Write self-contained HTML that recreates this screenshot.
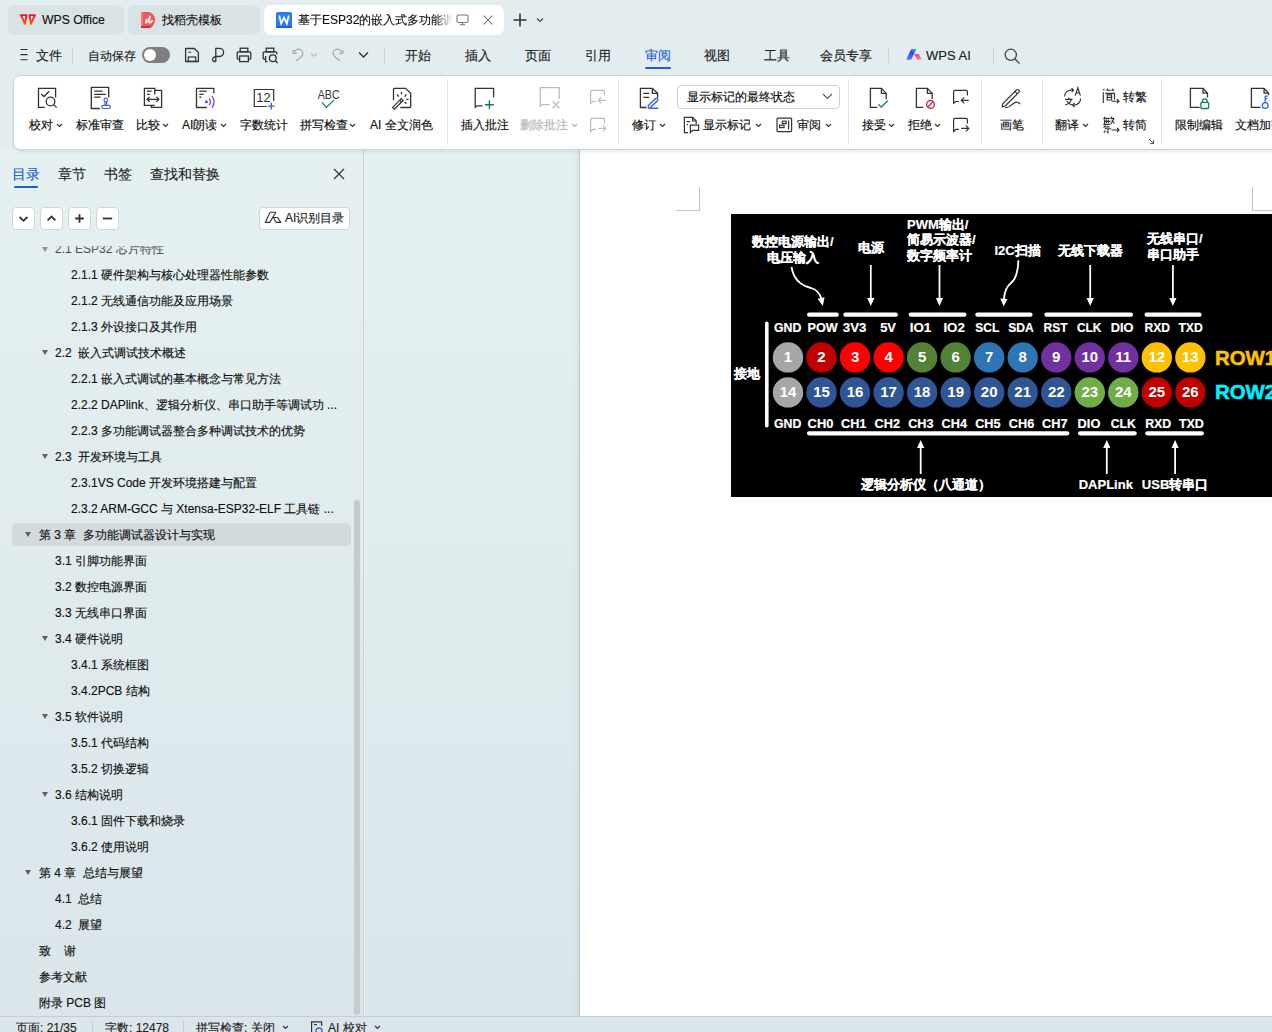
<!DOCTYPE html>
<html><head><meta charset="utf-8">
<style>
*{box-sizing:border-box;margin:0;padding:0}
html,body{width:1272px;height:1032px;overflow:hidden}
body{position:relative;font-family:"Liberation Sans",sans-serif;background:#e3edf0;color:#1f1f1f;font-size:13px;-webkit-text-stroke:0.15px currentColor}
.a{position:absolute;white-space:nowrap}
.tab{position:absolute;top:5px;height:30px;border-radius:7px;background:#d9e2e5}
.menu{position:absolute;top:47px;font-size:13px;line-height:18px;color:#222}
.sep{position:absolute;width:1px;background:#c9d2d5}
#ribbon{position:absolute;left:13px;top:75px;width:1280px;height:75px;background:#fff;border-radius:7px 0 0 7px;border:1px solid #cdd6d9;box-shadow:0 1px 2px rgba(80,100,110,.18)}
.rl{position:absolute;top:117px;font-size:12px;line-height:16px;color:#0d0d0d;white-space:nowrap}
.dd{top:123px;width:7px;height:5px;fill:none;stroke:#333;stroke-width:1.2}
.rsep{position:absolute;top:79px;height:66px;width:1px;background:#dfe3e5}
#panel{position:absolute;left:0;top:150px;width:365px;height:866px;background:linear-gradient(#e5f0f1,#dae6ea);border-right:1px solid #eef1f2}
#pline{position:absolute;left:363px;top:150px;width:1px;height:866px;background:#cdd3d5}
#gap{position:absolute;left:365px;top:150px;width:214px;height:866px;background:linear-gradient(#e5f0f1,#dae6ea)}
#page{position:absolute;left:579px;top:150px;width:693px;height:866px;background:#fff;border-left:1px solid #bfc3c5;box-shadow:-4px 0 5px rgba(40,70,90,.05)}
#rshadow{position:absolute;left:18px;top:150px;width:1254px;height:5px;background:linear-gradient(rgba(60,80,90,.10),rgba(60,80,90,0))}
#status{position:absolute;left:0;top:1016px;width:1272px;height:16px;background:#dbe6eb;border-top:1px solid #c5ced1}
.st{top:1020px;font-size:12px;line-height:16px;color:#1f1f1f}
.toc{position:absolute;font-size:12px;line-height:16px;color:#111;white-space:nowrap}
.tri{position:absolute;width:0;height:0;border-left:3.6px solid transparent;border-right:3.6px solid transparent;border-top:5.6px solid #606060}
.hl{position:absolute;left:12px;width:339px;height:23px;border-radius:5px;background:#d2dadd}
.btn{position:absolute;top:207px;width:23px;height:23px;background:#fff;border:1px solid #cfd6d9;border-radius:4px}
</style></head><body>
<!-- tabs -->
<div class="tab" style="left:8px;width:116px"></div>
<div class="tab" style="left:128px;width:132px"></div>
<div class="tab" style="left:264px;width:240px;background:#fff"></div>
<svg class="a" style="left:19px;top:13px" width="18" height="13" viewBox="0 0 18 13"><defs><linearGradient id="wg" x1="0" y1="0" x2="0" y2="1"><stop offset="0" stop-color="#ff1020"/><stop offset="1" stop-color="#ff5a00"/></linearGradient></defs><g fill="none" stroke="url(#wg)" stroke-width="1.9" stroke-linejoin="round"><path d="M1.9 2.1H7.4L6.1 10.9Z"/><path d="M10.5 2.1H16L11.9 10.9Z"/></g></svg>
<div class="a" style="left:42px;top:12px;font-size:12.2px;line-height:16px;color:#111">WPS Office</div>
<svg class="a" style="left:141px;top:12px" width="15" height="16" viewBox="0 0 15 16"><path d="M0 0H6.8A7.2 8 0 0 1 6.8 16H0Z" fill="#f05656"/><rect x="0" y="0" width="2" height="16" fill="#f47a7a"/><path d="M0 14H11.6A7.2 8 0 0 1 6.8 16H0Z" fill="#e02a2a"/><ellipse cx="5.3" cy="9.2" rx="1" ry="2.7" transform="rotate(12 5.3 9.2)" fill="#fff"/><ellipse cx="8.1" cy="7.3" rx="1.05" ry="4.1" transform="rotate(17 8.1 7.3)" fill="#fff"/><ellipse cx="9.9" cy="9.9" rx="1" ry="2.5" transform="rotate(52 9.9 9.9)" fill="#fff"/></svg>
<div class="a" style="left:162px;top:12px;font-size:12px;line-height:16px;color:#111">找稻壳模板</div>
<svg class="a" style="left:276px;top:12px" width="16" height="16" viewBox="0 0 16 16"><rect x="0" y="0" width="16" height="16" rx="2" fill="#2b7bf0"/><rect x="0" y="14" width="16" height="2" fill="#1d5fd8"/><path d="M3.2 3.5 L5.2 11.5 L8 5.6 L10.8 11.5 L12.8 3.5" stroke="#fff" stroke-width="1.8" fill="none" stroke-linejoin="miter"/></svg>
<div class="a" style="left:298px;top:12px;width:154px;overflow:hidden;font-size:12px;line-height:16px;color:#111;-webkit-mask-image:linear-gradient(90deg,#000 calc(100% - 16px),transparent)">基于ESP32的嵌入式多功能调试器</div>
<svg class="a" style="left:456px;top:14px" width="13" height="12" viewBox="0 0 13 12"><rect x="1" y="1" width="11" height="7.5" rx="1.5" stroke="#777" stroke-width="1.1" fill="none"/><path d="M6.5 8.5V10.8M3.8 10.8H9.2" stroke="#777" stroke-width="1.1"/></svg>
<svg class="a" style="left:483px;top:15px" width="10" height="10" viewBox="0 0 10 10"><path d="M0.6 0.6L9.4 9.4M9.4 0.6L0.6 9.4" stroke="#777" stroke-width="1.1"/></svg>
<svg class="a" style="left:513px;top:13px" width="14" height="14" viewBox="0 0 14 14"><path d="M7 0.5V13.5M0.5 7H13.5" stroke="#333" stroke-width="1.6"/></svg>
<svg class="a" style="left:536px;top:17px" width="8" height="6" viewBox="0 0 8 6"><path d="M1 1.5L4 4.5L7 1.5" stroke="#444" stroke-width="1.2" fill="none"/></svg>

<!-- menu row -->
<svg class="a" style="left:19px;top:48px" width="10" height="13" viewBox="0 0 10 13"><path d="M1.5 1.5H8.5M1.5 6.6H8.5M1.5 11.7H8.5" stroke="#333" stroke-width="1.1"/></svg>
<div class="menu" style="left:36px;font-size:12.5px">文件</div>
<div class="sep" style="left:72px;top:47px;height:17px"></div>
<div class="menu" style="left:88px;font-size:12px">自动保存</div>
<div class="a" style="left:142px;top:47px;width:28px;height:16px;border-radius:8px;background:#7f7f7f"></div>
<div class="a" style="left:144px;top:49px;width:12px;height:12px;border-radius:6px;background:#fff"></div>
<svg class="a" style="left:184px;top:47px" width="16" height="16" viewBox="0 0 16 16"><path d="M1.6 1.5H10.4L14.4 5.5V14.5H1.6Z" stroke="#333" stroke-width="1.3" fill="none" stroke-linejoin="round"/><rect x="4.3" y="10" width="7.4" height="4.5" stroke="#333" stroke-width="1.2" fill="none"/><path d="M4.5 5.2H7" stroke="#333" stroke-width="1.2"/></svg>
<svg class="a" style="left:211px;top:47px" width="14" height="16" viewBox="0 0 14 16"><path d="M4.8 14.5V1.3H8.5A4.1 4.1 0 0 1 8.5 9.5H5.8C3.5 9.5 1.5 10.5 1.5 12.4C1.5 14 3 14.6 4.8 14.5" stroke="#333" stroke-width="1.3" fill="none"/></svg>
<svg class="a" style="left:236px;top:47px" width="16" height="16" viewBox="0 0 16 16"><rect x="4.2" y="1.2" width="7.6" height="3.6" stroke="#333" stroke-width="1.3" fill="none"/><path d="M3.6 12.2H2.4A1.2 1.2 0 0 1 1.2 11V6A1.2 1.2 0 0 1 2.4 4.8H13.6A1.2 1.2 0 0 1 14.8 6V11A1.2 1.2 0 0 1 13.6 12.2H12.4" stroke="#333" stroke-width="1.3" fill="none"/><rect x="3.6" y="9" width="8.8" height="5.6" stroke="#333" stroke-width="1.3" fill="none"/></svg>
<svg class="a" style="left:262px;top:47px" width="17" height="17" viewBox="0 0 17 17"><rect x="4.2" y="1.2" width="7.6" height="3.6" stroke="#333" stroke-width="1.3" fill="none"/><path d="M3 12.2H2.4A1.2 1.2 0 0 1 1.2 11V6A1.2 1.2 0 0 1 2.4 4.8H13.6A1.2 1.2 0 0 1 14.8 6V7.5" stroke="#333" stroke-width="1.3" fill="none"/><path d="M3.6 9V14.6H5.5" stroke="#333" stroke-width="1.3" fill="none"/><circle cx="10.8" cy="11.2" r="3.4" stroke="#333" stroke-width="1.3" fill="none"/><path d="M13.2 13.6L15.6 16" stroke="#333" stroke-width="1.3"/></svg>
<svg class="a" style="left:291px;top:48px" width="14" height="15" viewBox="0 0 14 15" fill="none" stroke="#a8acae" stroke-width="1.3"><path d="M3.4 4.4A4 4 0 0 1 11.6 6.6C11.4 8.2 10.4 9.2 5 12.6"/><path d="M2.2 1.8V5.4H5.8"/></svg>
<svg class="a" style="left:310px;top:52px" width="8" height="6" viewBox="0 0 8 6"><path d="M1.2 1.5L4 4.3L6.8 1.5" stroke="#b5b9bb" stroke-width="1.1" fill="none"/></svg>
<svg class="a" style="left:331px;top:48px" width="14" height="15" viewBox="0 0 14 15" fill="none" stroke="#a8acae" stroke-width="1.3"><path d="M10.6 4.4A4 4 0 0 0 2.4 6.6C2.6 8.2 3.6 9.2 9 12.6"/><path d="M11.8 1.8V5.4H8.2"/></svg>
<svg class="a" style="left:358px;top:51px" width="11" height="8" viewBox="0 0 11 8"><path d="M1 1.5L5.5 6L10 1.5" stroke="#333" stroke-width="1.4" fill="none"/></svg>
<div class="sep" style="left:384px;top:47px;height:17px"></div>
<div class="menu" style="left:405px">开始</div>
<div class="menu" style="left:465px">插入</div>
<div class="menu" style="left:525px">页面</div>
<div class="menu" style="left:585px">引用</div>
<div class="menu" style="left:645px;color:#1a5fd0">审阅</div>
<div class="a" style="left:645px;top:67px;width:26px;height:2px;background:#1a5fd0;border-radius:1px"></div>
<div class="menu" style="left:704px">视图</div>
<div class="menu" style="left:764px">工具</div>
<div class="menu" style="left:820px">会员专享</div>
<div class="sep" style="left:888px;top:48px;height:15px"></div>
<svg class="a" style="left:905px;top:48px" width="18" height="13" viewBox="0 0 18 13"><defs><linearGradient id="aig1" x1="0.8" y1="0" x2="0.2" y2="1"><stop offset="0" stop-color="#1fb2ff"/><stop offset="0.35" stop-color="#3a3cf0"/><stop offset="1" stop-color="#4f86f7"/></linearGradient><linearGradient id="aig2" x1="0" y1="0" x2="1" y2="1"><stop offset="0" stop-color="#e81ee8"/><stop offset="1" stop-color="#ff9a7a"/></linearGradient></defs><path d="M6.2 1.1H11.5L6 11.7H1.1Z" fill="url(#aig1)"/><path d="M9.1 6.1H13.9L17 11.7H12.2Z" fill="url(#aig2)"/></svg>
<div class="menu" style="left:926px">WPS AI</div>
<div class="sep" style="left:993px;top:47px;height:17px"></div>
<svg class="a" style="left:1004px;top:48px" width="17" height="16" viewBox="0 0 17 16"><circle cx="6.8" cy="6.8" r="5.6" stroke="#444" stroke-width="1.3" fill="none"/><path d="M10.8 10.8L15.6 15.6" stroke="#444" stroke-width="1.3"/></svg>

<!-- ribbon -->
<div id="ribbon"></div>
<!-- ribbon icons -->
<svg class="a" style="left:36px;top:86px" width="24" height="24" viewBox="0 0 24 24" fill="none" stroke="#333" stroke-width="1.3"><path d="M8.8 21.3H2.5V2.4H19.6V11.6"/><path d="M5.3 8L7.9 10.5L13.2 5.2"/><circle cx="14.5" cy="15.5" r="4.3"/><path d="M17.6 18.6L20.7 21.6"/></svg>
<svg class="a" style="left:90px;top:86px" width="24" height="24" viewBox="0 0 24 24" fill="none" stroke="#333" stroke-width="1.3"><path d="M9.8 22.5H1.3V1.3H18.7V11.6"/><path d="M4.2 5.2H12.7M4.2 8.4H15.8M4.2 11.2H10.5"/><g stroke="#3b63e8" stroke-width="1.2"><circle cx="15.8" cy="14" r="1.8"/><path d="M15 15.6V19.4M16.6 15.6V19.4"/><rect x="11.8" y="19.4" width="8.6" height="3.1" rx="1.5"/></g></svg>
<svg class="a" style="left:143px;top:86px" width="22" height="24" viewBox="0 0 22 24" fill="none" stroke="#333" stroke-width="1.3"><path d="M11.8 8.4V2.4H1.4V19.4H11.8"/><path d="M11.8 4.4H18.6V21.3H8.4V19.4"/><path d="M4 5.2H8.7M4 8.4H6.8"/><path d="M4.2 13.3H15.8M6.6 10.9L4.2 13.3L6.6 15.7M13.4 10.9L15.8 13.3L13.4 15.7"/></svg>
<svg class="a" style="left:195px;top:86px" width="22" height="24" viewBox="0 0 22 24" fill="none" stroke="#333" stroke-width="1.3"><path d="M11.8 21.5H1.5V2.4H18.8V7.3"/><path d="M4.3 5.2H11.8M4.3 8.4H8.6M4.3 11.2H6.5"/><g stroke="#7a3cf0" stroke-width="1.3"><circle cx="11.4" cy="15.8" r="0.9" fill="#7a3cf0"/><path d="M14.2 12.3C15.6 14.3 15.6 17.3 14.2 19.3"/><path d="M17 10C19.4 13.4 19.4 18.2 17 21.8"/></g></svg>
<svg class="a" style="left:252px;top:86px" width="25" height="24" viewBox="0 0 25 24" fill="none" stroke="#333" stroke-width="1.2"><path d="M14.8 20.5H2.3V3.5H21.7V14.9"/><text x="4.2" y="16" font-family="Liberation Sans" font-size="13" fill="#333" stroke="none">12</text><path d="M19.3 16.8V23.4M16 20.1H22.6" stroke="#2f5ff0" stroke-width="1.3"/></svg>
<svg class="a" style="left:316px;top:86px" width="26" height="24" viewBox="0 0 26 24"><text x="1.8" y="12.9" font-family="Liberation Sans" font-size="13.6" fill="#333" textLength="21.8" lengthAdjust="spacingAndGlyphs">ABC</text><path d="M6.1 16.3L10.2 21.5L18.2 13.9" stroke="#1a8a5a" stroke-width="1.3" fill="none"/></svg>
<svg class="a" style="left:390px;top:86px" width="22" height="24" viewBox="0 0 22 24" fill="none" stroke="#333" stroke-width="1.3"><path d="M3.5 14.2V3.2A0.8 0.8 0 0 1 4.3 2.4H15.6L20.7 7.3V20.7A0.8 0.8 0 0 1 19.9 21.5H10.3"/><path d="M11.5 6V8.6M7.1 8.4L8.7 10.6M16.4 8.4L14.5 10.6M16.3 13.4H18.6M14.5 16L16.4 17.7"/><path d="M2.6 21.4L4.4 23.2L13.1 14.4L11.3 12.6Z"/><path d="M9.6 14.2L11.5 16"/></svg>
<svg class="a" style="left:473px;top:86px" width="24" height="24" viewBox="0 0 24 24" fill="none" stroke="#333" stroke-width="1.3"><path d="M9.5 19.8H4.2L2.2 21.2V2.4H20.6V11.4"/><path d="M16.4 14.3V23.2M12 18.7H20.9" stroke="#0e8050" stroke-width="1.4"/></svg>
<svg class="a" style="left:538px;top:86px" width="24" height="24" viewBox="0 0 24 24" fill="none" stroke="#bbb" stroke-width="1.3"><path d="M11.5 18.6H4.2L2.2 20.2V1.6H21.2V13"/><path d="M14.6 15.4L21.3 22.2M21.3 15.4L14.6 22.2"/></svg>
<svg class="a" style="left:588px;top:88px" width="20" height="17" viewBox="0 0 20 17" fill="none" stroke="#bbb" stroke-width="1.2"><path d="M7.9 13.5H4.9L2.6 15.2V3.6A1.2 1.2 0 0 1 3.8 2.4H15.2A1.2 1.2 0 0 1 16.4 3.6V7.4"/><path d="M10.3 12.4H17.8M13.3 9.4L10.3 12.4L13.3 15.4"/></svg>
<svg class="a" style="left:588px;top:116px" width="20" height="17" viewBox="0 0 20 17" fill="none" stroke="#bbb" stroke-width="1.2"><path d="M7.9 13.3H4.9L2.6 15.5V3.6A1.2 1.2 0 0 1 3.8 2.4H15.2A1.2 1.2 0 0 1 16.4 3.6V7.5"/><path d="M10.3 12.4H17.8M14.8 9.4L17.8 12.4L14.8 15.4"/></svg>
<svg class="a" style="left:638px;top:86px" width="24" height="24" viewBox="0 0 24 24" fill="none" stroke="#333" stroke-width="1.3"><path d="M8.6 21.5H2.4V2.4H14.4L19.6 7.4V11.8"/><path d="M14.4 2.4V7.4H19.6"/><path d="M5.3 7.4H11.2M5.3 11.4H11.2"/><g stroke="#2f5ff0" stroke-width="1.4"><path d="M10.4 22.2H20.4M10.4 22.2V19.6L17.4 12.8A1.4 1.4 0 0 1 19.4 14.8L12.4 21.6"/></g></svg>
<div class="a" style="left:677px;top:85px;width:163px;height:24px;border:1px solid #cfcfcf;border-radius:4px;background:#fff"></div>
<div class="rl" style="left:687px;top:89px">显示标记的最终状态</div>
<svg class="a" style="left:822px;top:93px" width="11" height="7" viewBox="0 0 11 7"><path d="M1 1L5.5 5.5L10 1" stroke="#555" stroke-width="1.1" fill="none"/></svg>
<svg class="a" style="left:683px;top:116px" width="17" height="18" viewBox="0 0 17 18" fill="none" stroke="#333" stroke-width="1.2"><path d="M5 16.6H1.4V1.3H9.6L13.2 5V8"/><path d="M9.6 1.3V5H13.2"/><path d="M3.6 5.6H7M3.6 8.6H5"/><path d="M6.8 9.2H15.6V14.4H9.8L7.4 16.6V9.2Z"/></svg>
<svg class="a" style="left:776px;top:117px" width="17" height="16" viewBox="0 0 17 16" fill="none" stroke="#333" stroke-width="1.2"><rect x="1" y="1.2" width="14.6" height="13.4" rx="1"/><rect x="3.6" y="8.2" width="4.4" height="2.4"/><rect x="6.4" y="4.2" width="3.8" height="2.4"/><path d="M12.6 3.4V12.4"/></svg>
<svg class="a" style="left:868px;top:86px" width="24" height="24" viewBox="0 0 24 24" fill="none" stroke="#333" stroke-width="1.3"><path d="M9.4 21.3H2.4V2.4H13.4L18.2 7.4V13.2"/><path d="M13.4 2.4V7.4H18.2"/><path d="M10.5 18.3L13.2 21.2L20 14.6" stroke="#1a8a5a" stroke-width="1.4"/></svg>
<svg class="a" style="left:914px;top:86px" width="24" height="24" viewBox="0 0 24 24" fill="none" stroke="#333" stroke-width="1.3"><path d="M9.4 21.3H2.4V2.4H13.4L18.2 7.4V13"/><path d="M13.4 2.4V7.4H18.2"/><g stroke="#d0284a" stroke-width="1.4"><circle cx="16.5" cy="18.4" r="3.9"/><path d="M14 21L19 15.8"/></g></svg>
<svg class="a" style="left:951px;top:88px" width="20" height="17" viewBox="0 0 20 17" fill="none" stroke="#333" stroke-width="1.2"><path d="M7.9 13.5H4.9L2.6 15.2V3.6A1.2 1.2 0 0 1 3.8 2.4H15.2A1.2 1.2 0 0 1 16.4 3.6V7.4"/><path d="M10.3 12.4H17.8M13.3 9.4L10.3 12.4L13.3 15.4"/></svg>
<svg class="a" style="left:951px;top:116px" width="20" height="17" viewBox="0 0 20 17" fill="none" stroke="#333" stroke-width="1.2"><path d="M7.9 13.3H4.9L2.6 15.5V3.6A1.2 1.2 0 0 1 3.8 2.4H15.2A1.2 1.2 0 0 1 16.4 3.6V7.5"/><path d="M10.3 12.4H17.8M14.8 9.4L17.8 12.4L14.8 15.4"/></svg>
<svg class="a" style="left:1000px;top:86px" width="24" height="24" viewBox="0 0 24 24" fill="none" stroke="#333" stroke-width="1.2"><path d="M2.6 17.8L16.4 4A1.6 1.6 0 0 1 18.8 6.4L5 20.2L2.2 20.8Z"/><path d="M15 5.4L17.4 7.8"/><path d="M5.4 21.6C8.4 22.4 10.4 20 12.4 18.2C14.2 16.6 15.8 15.6 17.6 16.2C18.8 16.6 19.6 17.6 20.2 18"/></svg>
<svg class="a" style="left:1063px;top:86px" width="20" height="24" viewBox="0 0 20 24" fill="none" stroke="#333" stroke-width="1.2"><path d="M1.6 10.6A6.4 6.4 0 0 1 7.6 4.2H10.2M8.6 2.2L10.6 4.2L8.6 6.2"/><path d="M12.2 9.6L14.8 1.8L17.4 9.6M13.2 7H16.4"/><path d="M2 13.4H9.6M5.8 11.6V13.4M8.4 13.4C7.6 16 5 18.2 2.2 19M3.6 14.8C4.8 17 6.6 18.4 9 19"/><path d="M17.6 12.6A6.4 6.4 0 0 1 11.6 19H9.8M11.6 16.8L9.6 19L11.6 21.2"/></svg>
<svg class="a" style="left:1102px;top:88px" width="18" height="16" viewBox="0 0 18 16" fill="none" stroke="#333" stroke-width="1.15"><path d="M1.2 1L2.4 2.4M1.3 4.2V15M4.3 2.2H8.8M5.3 0.6L5.8 2.2M9.4 2.2H12.2M10.6 0.6L11.2 2.2M3.3 5.4H12.5V11.6"/><path d="M5.2 6.8H9.6V12H5.2ZM5.2 9.4H9.6"/><path d="M9.6 13.2H17M15 11.2L17 13.2L15 15.2"/></svg>
<svg class="a" style="left:1102px;top:116px" width="18" height="18" viewBox="0 0 18 18" fill="none" stroke="#333" stroke-width="1.1"><path d="M3 0.8L1.5 3.2M2.4 2.4H7.6M1.8 5.4H8.4M2.6 3.6V8.4M4.4 3.6V7M6.4 3.6V7M1.2 8.4H8.6M9.6 0.8L8.8 3M9.2 2.4H12.4M12 2.4L9 7.8M9.8 3.8L12.4 7.8"/><path d="M3.6 9.4L2 11H7.6M6.4 10L5 11.4M2.6 12.8H9.2M6 12.8V16.6L4.6 16M3.4 14.6L1.8 16.6"/><path d="M9.4 14H17M15 12L17 14L15 16"/></svg>
<svg class="a" style="left:1148px;top:138px" width="7" height="7" viewBox="0 0 7 7" fill="none" stroke="#555" stroke-width="1"><path d="M1 1L5.6 5.6M5.6 2V5.6H2"/></svg>
<svg class="a" style="left:1188px;top:86px" width="24" height="24" viewBox="0 0 24 24" fill="none" stroke="#333" stroke-width="1.3"><path d="M11.6 21.3H2.4V2.4H15.1L19.5 7.2V11.6"/><path d="M15.1 2.4V7.2H19.5"/><g stroke="#128050" stroke-width="1.3"><path d="M14.4 16.4V15.2A2.4 2.4 0 0 1 19.2 15.2V16.4"/><rect x="12.9" y="16.4" width="7.7" height="6.1" rx="1"/></g></svg>
<svg class="a" style="left:1250px;top:86px" width="22" height="24" viewBox="0 0 22 24" fill="none" stroke="#333" stroke-width="1.3"><path d="M10.6 21.3H1.4V2.4H14.1L18.5 7.2V9"/><path d="M14.1 2.4V7.2H18.5"/><g stroke="#2f5ff0" stroke-width="1.3"><circle cx="15.2" cy="19.5" r="2.9"/><path d="M15.2 16.6V9.8M15.2 10.2H17.8M15.2 12.6H17.2"/></g></svg>
<!-- ribbon labels -->
<div class="rl" style="left:29px">校对</div>
<div class="rl" style="left:76px">标准审查</div>
<div class="rl" style="left:136px">比较</div>
<div class="rl" style="left:182px">AI朗读</div>
<div class="rl" style="left:240px">字数统计</div>
<div class="rl" style="left:300px">拼写检查</div>
<div class="rl" style="left:370px">AI 全文润色</div>
<div class="rl" style="left:461px">插入批注</div>
<div class="rl" style="left:520px;color:#b3b3b3">删除批注</div>
<div class="rl" style="left:632px">修订</div>
<div class="rl" style="left:703px">显示标记</div>
<div class="rl" style="left:797px">审阅</div>
<div class="rl" style="left:862px">接受</div>
<div class="rl" style="left:908px">拒绝</div>
<div class="rl" style="left:1000px">画笔</div>
<div class="rl" style="left:1055px">翻译</div>
<div class="rl" style="left:1123px;top:89px">转繁</div>
<div class="rl" style="left:1123px">转简</div>
<div class="rl" style="left:1175px">限制编辑</div>
<div class="rl" style="left:1235px">文档加密</div>
<!-- dropdown chevrons -->
<svg class="a dd" style="left:56px"><path d="M1 1L3.5 3.5L6 1"/></svg>
<svg class="a dd" style="left:162px"><path d="M1 1L3.5 3.5L6 1"/></svg>
<svg class="a dd" style="left:220px"><path d="M1 1L3.5 3.5L6 1"/></svg>
<svg class="a dd" style="left:349px"><path d="M1 1L3.5 3.5L6 1"/></svg>
<svg class="a dd" style="left:571px;stroke:#b3b3b3"><path d="M1 1L3.5 3.5L6 1"/></svg>
<svg class="a dd" style="left:659px"><path d="M1 1L3.5 3.5L6 1"/></svg>
<svg class="a dd" style="left:755px"><path d="M1 1L3.5 3.5L6 1"/></svg>
<svg class="a dd" style="left:825px"><path d="M1 1L3.5 3.5L6 1"/></svg>
<svg class="a dd" style="left:888px"><path d="M1 1L3.5 3.5L6 1"/></svg>
<svg class="a dd" style="left:934px"><path d="M1 1L3.5 3.5L6 1"/></svg>
<svg class="a dd" style="left:1082px"><path d="M1 1L3.5 3.5L6 1"/></svg>
<!-- ribbon separators -->
<div class="rsep" style="left:447px"></div>
<div class="rsep" style="left:618px"></div>
<div class="rsep" style="left:848px"></div>
<div class="rsep" style="left:981px"></div>
<div class="rsep" style="left:1042px"></div>
<div class="rsep" style="left:1161px"></div>

<!-- panels -->
<div id="panel"></div>
<div id="gap"></div>
<div id="pline"></div>
<div id="page"></div>
<div id="rshadow"></div>
<!-- panel header -->
<div class="a" style="left:12px;top:165px;font-size:14px;line-height:18px;color:#1a5fd0">目录</div>
<div class="a" style="left:14px;top:186px;width:24px;height:2px;background:#1a5fd0;border-radius:1px"></div>
<div class="a" style="left:58px;top:165px;font-size:14px;line-height:18px;color:#1f1f1f">章节</div>
<div class="a" style="left:104px;top:165px;font-size:14px;line-height:18px;color:#1f1f1f">书签</div>
<div class="a" style="left:150px;top:165px;font-size:14px;line-height:18px;color:#1f1f1f">查找和替换</div>
<svg class="a" style="left:333px;top:168px" width="12" height="12" viewBox="0 0 12 12"><path d="M1 1L11 11M11 1L1 11" stroke="#333" stroke-width="1.2"/></svg>
<div class="btn" style="left:12px"></div>
<div class="btn" style="left:40px"></div>
<div class="btn" style="left:68px"></div>
<div class="btn" style="left:96px"></div>
<svg class="a" style="left:12px;top:207px" width="23" height="23" viewBox="0 0 23 23" fill="none" stroke="#333" stroke-width="1.8"><path d="M7.6 10L11.5 13.8L15.4 10"/></svg>
<svg class="a" style="left:40px;top:207px" width="23" height="23" viewBox="0 0 23 23" fill="none" stroke="#333" stroke-width="1.8"><path d="M7.6 13.4L11.5 9.6L15.4 13.4"/></svg>
<svg class="a" style="left:68px;top:207px" width="23" height="23" viewBox="0 0 23 23" fill="none" stroke="#333" stroke-width="1.8"><path d="M11.5 7.2V15.8M7.2 11.5H15.8"/></svg>
<svg class="a" style="left:96px;top:207px" width="23" height="23" viewBox="0 0 23 23" fill="none" stroke="#333" stroke-width="1.8"><path d="M6.8 11.5H16.2"/></svg>
<div class="btn" style="left:259px;width:91px"></div>
<svg class="a" style="left:264px;top:211px" width="18" height="13" viewBox="0 0 18 13" fill="none" stroke="#333" stroke-width="1.1" stroke-linejoin="round"><path d="M6.1 1.3H11.8L5.8 11.4H1.3Z"/><path d="M9.4 6.5H13.5L16.8 11.4H12.2Z"/></svg>
<div class="a" style="left:285px;top:210px;font-size:12px;line-height:16px;color:#1f1f1f">AI识别目录</div>
<!-- toc -->
<div class="a" style="left:0;top:246px;width:362px;height:770px;overflow:hidden">
 <div style="position:absolute;left:0;top:-246px;width:362px;height:1100px">
 <div class="hl" style="top:523px"></div>
 <i class="tri" style="left:42px;top:246.5px"></i><div class="toc" style="left:55px;top:241px">2.1 ESP32 芯片特性</div>
 <div class="toc" style="left:71px;top:267px">2.1.1 硬件架构与核心处理器性能参数</div>
 <div class="toc" style="left:71px;top:293px">2.1.2 无线通信功能及应用场景</div>
 <div class="toc" style="left:71px;top:319px">2.1.3 外设接口及其作用</div>
 <i class="tri" style="left:42px;top:349.5px"></i><div class="toc" style="left:55px;top:345px">2.2&nbsp; 嵌入式调试技术概述</div>
 <div class="toc" style="left:71px;top:371px">2.2.1 嵌入式调试的基本概念与常见方法</div>
 <div class="toc" style="left:71px;top:397px">2.2.2 DAPlink、逻辑分析仪、串口助手等调试功 ...</div>
 <div class="toc" style="left:71px;top:423px">2.2.3 多功能调试器整合多种调试技术的优势</div>
 <i class="tri" style="left:42px;top:453.5px"></i><div class="toc" style="left:55px;top:449px">2.3&nbsp; 开发环境与工具</div>
 <div class="toc" style="left:71px;top:475px">2.3.1VS Code 开发环境搭建与配置</div>
 <div class="toc" style="left:71px;top:501px">2.3.2 ARM-GCC 与 Xtensa-ESP32-ELF 工具链 ...</div>
 <i class="tri" style="left:25px;top:531.5px"></i><div class="toc" style="left:39px;top:527px">第 3 章&nbsp; 多功能调试器设计与实现</div>
 <div class="toc" style="left:55px;top:553px">3.1 引脚功能界面</div>
 <div class="toc" style="left:55px;top:579px">3.2 数控电源界面</div>
 <div class="toc" style="left:55px;top:605px">3.3 无线串口界面</div>
 <i class="tri" style="left:42px;top:635.5px"></i><div class="toc" style="left:55px;top:631px">3.4 硬件说明</div>
 <div class="toc" style="left:71px;top:657px">3.4.1 系统框图</div>
 <div class="toc" style="left:71px;top:683px">3.4.2PCB 结构</div>
 <i class="tri" style="left:42px;top:713.5px"></i><div class="toc" style="left:55px;top:709px">3.5 软件说明</div>
 <div class="toc" style="left:71px;top:735px">3.5.1 代码结构</div>
 <div class="toc" style="left:71px;top:761px">3.5.2 切换逻辑</div>
 <i class="tri" style="left:42px;top:791.5px"></i><div class="toc" style="left:55px;top:787px">3.6 结构说明</div>
 <div class="toc" style="left:71px;top:813px">3.6.1 固件下载和烧录</div>
 <div class="toc" style="left:71px;top:839px">3.6.2 使用说明</div>
 <i class="tri" style="left:25px;top:869.5px"></i><div class="toc" style="left:39px;top:865px">第 4 章&nbsp; 总结与展望</div>
 <div class="toc" style="left:55px;top:891px">4.1&nbsp; 总结</div>
 <div class="toc" style="left:55px;top:917px">4.2&nbsp; 展望</div>
 <div class="toc" style="left:39px;top:943px">致&nbsp;&nbsp;&nbsp;&nbsp;谢</div>
 <div class="toc" style="left:39px;top:969px">参考文献</div>
 <div class="toc" style="left:39px;top:995px">附录 PCB 图</div>
 </div>
</div>
<div class="a" style="left:0;top:246px;width:352px;height:10px;background:linear-gradient(rgba(228,239,241,.45),rgba(228,239,241,.15))"></div>
<div class="a" style="left:354px;top:500px;width:6px;height:515px;border-radius:3px;background:#c4ccd0"></div>

<!-- diagram -->
<svg class="a" style="left:731px;top:214px" width="541" height="283" viewBox="0 0 541 283">
<rect x="0" y="0" width="541" height="283" fill="#000"/>
<g font-family="Liberation Sans" font-weight="bold" fill="#fff" stroke="#fff" stroke-width="0.2">
<text x="61.7" y="32" font-size="13" text-anchor="middle" >数控电源输出/</text>
<text x="61.7" y="47.5" font-size="13" text-anchor="middle" >电压输入</text>
<text x="139.5" y="38" font-size="13" text-anchor="middle" >电源</text>
<text x="176" y="14.5" font-size="13" text-anchor="start" >PWM输出/</text>
<text x="176" y="30" font-size="13" text-anchor="start" >简易示波器/</text>
<text x="176" y="45.5" font-size="13" text-anchor="start" >数字频率计</text>
<text x="263.4" y="40.5" font-size="13" text-anchor="start" >I2C扫描</text>
<text x="326.6" y="40.5" font-size="13" text-anchor="start" >无线下载器</text>
<text x="416" y="29" font-size="13" text-anchor="start" >无线串口/</text>
<text x="416.4" y="44.5" font-size="13" text-anchor="start" >串口助手</text>
<text x="43" y="117.6" font-size="13.2" textLength="27.4" lengthAdjust="spacingAndGlyphs">GND</text>
<text x="76.6" y="117.6" font-size="13.2" textLength="30.2" lengthAdjust="spacingAndGlyphs">POW</text>
<text x="111.8" y="117.6" font-size="13.2" textLength="23.6" lengthAdjust="spacingAndGlyphs">3V3</text>
<text x="149.2" y="117.6" font-size="13.2" textLength="15.8" lengthAdjust="spacingAndGlyphs">5V</text>
<text x="178.7" y="117.6" font-size="13.2" textLength="21.6" lengthAdjust="spacingAndGlyphs">IO1</text>
<text x="212.4" y="117.6" font-size="13.2" textLength="21.4" lengthAdjust="spacingAndGlyphs">IO2</text>
<text x="244.3" y="117.6" font-size="13.2" textLength="24.0" lengthAdjust="spacingAndGlyphs">SCL</text>
<text x="277.2" y="117.6" font-size="13.2" textLength="25.5" lengthAdjust="spacingAndGlyphs">SDA</text>
<text x="312.6" y="117.6" font-size="13.2" textLength="24.0" lengthAdjust="spacingAndGlyphs">RST</text>
<text x="345.9" y="117.6" font-size="13.2" textLength="24.4" lengthAdjust="spacingAndGlyphs">CLK</text>
<text x="379.8" y="117.6" font-size="13.2" textLength="22.8" lengthAdjust="spacingAndGlyphs">DIO</text>
<text x="413.5" y="117.6" font-size="13.2" textLength="25.5" lengthAdjust="spacingAndGlyphs">RXD</text>
<text x="447.4" y="117.6" font-size="13.2" textLength="24.4" lengthAdjust="spacingAndGlyphs">TXD</text>
<text x="43" y="213.8" font-size="13.2" textLength="27.4" lengthAdjust="spacingAndGlyphs">GND</text>
<text x="76.6" y="213.8" font-size="13.2" textLength="25.8" lengthAdjust="spacingAndGlyphs">CH0</text>
<text x="110" y="213.8" font-size="13.2" textLength="25.4" lengthAdjust="spacingAndGlyphs">CH1</text>
<text x="143.6" y="213.8" font-size="13.2" textLength="25.4" lengthAdjust="spacingAndGlyphs">CH2</text>
<text x="177.2" y="213.8" font-size="13.2" textLength="25.4" lengthAdjust="spacingAndGlyphs">CH3</text>
<text x="210.6" y="213.8" font-size="13.2" textLength="25.4" lengthAdjust="spacingAndGlyphs">CH4</text>
<text x="244.2" y="213.8" font-size="13.2" textLength="25.4" lengthAdjust="spacingAndGlyphs">CH5</text>
<text x="277.8" y="213.8" font-size="13.2" textLength="25.5" lengthAdjust="spacingAndGlyphs">CH6</text>
<text x="311" y="213.8" font-size="13.2" textLength="25.6" lengthAdjust="spacingAndGlyphs">CH7</text>
<text x="346.6" y="213.8" font-size="13.2" textLength="22.8" lengthAdjust="spacingAndGlyphs">DIO</text>
<text x="379.8" y="213.8" font-size="13.2" textLength="25.1" lengthAdjust="spacingAndGlyphs">CLK</text>
<text x="414.2" y="213.8" font-size="13.2" textLength="26.1" lengthAdjust="spacingAndGlyphs">RXD</text>
<text x="447.9" y="213.8" font-size="13.2" textLength="25.0" lengthAdjust="spacingAndGlyphs">TXD</text>
<text x="16" y="164" font-size="13" text-anchor="middle" >接地</text>
<text x="194.5" y="275" font-size="13" text-anchor="middle" >逻辑分析仪（八通道）</text>
<text x="374.8" y="275" font-size="13" text-anchor="middle" >DAPLink</text>
<text x="444.1" y="275" font-size="13" text-anchor="middle" >USB转串口</text>
</g>
<rect x="76" y="98.6" width="31.9" height="4.2" rx="2.1" fill="#fff"/>
<rect x="112.3" y="98.6" width="54.6" height="4.2" rx="2.1" fill="#fff"/>
<rect x="177.6" y="98.6" width="57.9" height="4.2" rx="2.1" fill="#fff"/>
<rect x="244.3" y="98.6" width="57.3" height="4.2" rx="2.1" fill="#fff"/>
<rect x="313.3" y="98.6" width="88.7" height="4.2" rx="2.1" fill="#fff"/>
<rect x="413.5" y="98.6" width="57.2" height="4.2" rx="2.1" fill="#fff"/>
<rect x="76" y="217.2" width="262.4" height="4.2" rx="2.1" fill="#fff"/>
<rect x="347" y="217.2" width="58.8" height="4.2" rx="2.1" fill="#fff"/>
<rect x="414.2" y="217.2" width="58.7" height="4.2" rx="2.1" fill="#fff"/>
<rect x="34" y="107.5" width="3.6" height="106.0" rx="1.8" fill="#fff"/>
<path d="M139.8 51 V85" stroke="#fff" stroke-width="1.8"/>
<path d="M136.2 84 L139.8 92 L143.4 84 Z" fill="#fff"/>
<path d="M208.5 51 V85" stroke="#fff" stroke-width="1.8"/>
<path d="M204.9 84 L208.5 92 L212.1 84 Z" fill="#fff"/>
<path d="M359.2 51 V85" stroke="#fff" stroke-width="1.8"/>
<path d="M355.6 84 L359.2 92 L362.8 84 Z" fill="#fff"/>
<path d="M441.9 51 V85" stroke="#fff" stroke-width="1.8"/>
<path d="M438.3 84 L441.9 92 L445.5 84 Z" fill="#fff"/>
<path d="M189.7 260 V233" stroke="#fff" stroke-width="1.8"/>
<path d="M186.1 234 L189.7 226 L193.3 234 Z" fill="#fff"/>
<path d="M375.8 260 V233" stroke="#fff" stroke-width="1.8"/>
<path d="M372.2 234 L375.8 226 L379.4 234 Z" fill="#fff"/>
<path d="M444.1 260 V233" stroke="#fff" stroke-width="1.8"/>
<path d="M440.5 234 L444.1 226 L447.7 234 Z" fill="#fff"/>
<path d="M60.5 53 C63 69 75 73 80 74 C86 75.5 89 80 90.5 85" stroke="#fff" stroke-width="1.8" fill="none"/>
<path d="M86.6 84.8 L91.8 92 L93.6 83.2 Z" fill="#fff"/>
<path d="M287.4 46.3 C287 58 284 66 280 69 C275 73 273.4 78 273 85" stroke="#fff" stroke-width="1.8" fill="none"/>
<path d="M269.2 84.6 L272.7 92.4 L276.4 85 Z" fill="#fff"/>
<g font-family="Liberation Sans" font-weight="bold" fill="#fff" font-size="15" text-anchor="middle">
<circle cx="57.0" cy="143.4" r="15.2" fill="#a6a6a6"/>
<circle cx="57.0" cy="178.4" r="15.2" fill="#a6a6a6"/>
<text x="57.0" y="148.1">1</text>
<text x="57.0" y="183.1">14</text>
<circle cx="90.53" cy="143.4" r="15.2" fill="#c00000"/>
<circle cx="90.53" cy="178.4" r="15.2" fill="#2f5597"/>
<text x="90.53" y="148.1">2</text>
<text x="90.53" y="183.1">15</text>
<circle cx="124.06" cy="143.4" r="15.2" fill="#ff0000"/>
<circle cx="124.06" cy="178.4" r="15.2" fill="#2f5597"/>
<text x="124.06" y="148.1">3</text>
<text x="124.06" y="183.1">16</text>
<circle cx="157.59" cy="143.4" r="15.2" fill="#ff0000"/>
<circle cx="157.59" cy="178.4" r="15.2" fill="#2f5597"/>
<text x="157.59" y="148.1">4</text>
<text x="157.59" y="183.1">17</text>
<circle cx="191.12" cy="143.4" r="15.2" fill="#538135"/>
<circle cx="191.12" cy="178.4" r="15.2" fill="#2f5597"/>
<text x="191.12" y="148.1">5</text>
<text x="191.12" y="183.1">18</text>
<circle cx="224.65" cy="143.4" r="15.2" fill="#538135"/>
<circle cx="224.65" cy="178.4" r="15.2" fill="#2f5597"/>
<text x="224.65" y="148.1">6</text>
<text x="224.65" y="183.1">19</text>
<circle cx="258.18" cy="143.4" r="15.2" fill="#2e75b6"/>
<circle cx="258.18" cy="178.4" r="15.2" fill="#2f5597"/>
<text x="258.18" y="148.1">7</text>
<text x="258.18" y="183.1">20</text>
<circle cx="291.71" cy="143.4" r="15.2" fill="#2e75b6"/>
<circle cx="291.71" cy="178.4" r="15.2" fill="#2f5597"/>
<text x="291.71" y="148.1">8</text>
<text x="291.71" y="183.1">21</text>
<circle cx="325.24" cy="143.4" r="15.2" fill="#7030a0"/>
<circle cx="325.24" cy="178.4" r="15.2" fill="#2f5597"/>
<text x="325.24" y="148.1">9</text>
<text x="325.24" y="183.1">22</text>
<circle cx="358.77" cy="143.4" r="15.2" fill="#7030a0"/>
<circle cx="358.77" cy="178.4" r="15.2" fill="#70ad47"/>
<text x="358.77" y="148.1">10</text>
<text x="358.77" y="183.1">23</text>
<circle cx="392.3" cy="143.4" r="15.2" fill="#7030a0"/>
<circle cx="392.3" cy="178.4" r="15.2" fill="#70ad47"/>
<text x="392.3" y="148.1">11</text>
<text x="392.3" y="183.1">24</text>
<circle cx="425.83" cy="143.4" r="15.2" fill="#ffc000"/>
<circle cx="425.83" cy="178.4" r="15.2" fill="#c00000"/>
<text x="425.83" y="148.1">12</text>
<text x="425.83" y="183.1">25</text>
<circle cx="459.36" cy="143.4" r="15.2" fill="#ffc000"/>
<circle cx="459.36" cy="178.4" r="15.2" fill="#c00000"/>
<text x="459.36" y="148.1">13</text>
<text x="459.36" y="183.1">26</text>
</g>
<text x="484" y="150.8" font-family="Liberation Sans" font-weight="bold" font-size="20.4" fill="#ffc000" stroke="#ffc000" stroke-width="0.5">ROW1</text>
<text x="484" y="184.8" font-family="Liberation Sans" font-weight="bold" font-size="20.4" fill="#00f0ff" stroke="#00f0ff" stroke-width="0.5">ROW2</text>
</svg>
<div class="a" style="left:676px;top:210px;width:24px;height:1px;background:#c4c4c4"></div>
<div class="a" style="left:699px;top:187px;width:1px;height:24px;background:#c4c4c4"></div>
<div class="a" style="left:1252px;top:210px;width:20px;height:1px;background:#c4c4c4"></div>
<div class="a" style="left:1252px;top:187px;width:1px;height:24px;background:#c4c4c4"></div>
<!-- /diagram -->
<div id="status"></div>
<div class="a st" style="left:16px">页面: 21/35</div>
<div class="sep" style="left:92px;top:1021px;height:12px;background:#c3ccd0"></div>
<div class="a st" style="left:105px">字数: 12478</div>
<div class="sep" style="left:183px;top:1021px;height:12px;background:#c3ccd0"></div>
<div class="a st" style="left:196px">拼写检查: 关闭</div>
<svg class="a" style="left:282px;top:1025px" width="7" height="5" viewBox="0 0 7 5"><path d="M1 1L3.5 3.5L6 1" stroke="#333" stroke-width="1.2" fill="none"/></svg>
<svg class="a" style="left:310px;top:1021px" width="14" height="12" viewBox="0 0 14 12" fill="none"><path d="M5 11.5H1.6V0.8H11.6V5" stroke="#333" stroke-width="1.2"/><path d="M4 3.6H7" stroke="#333" stroke-width="1.1"/><circle cx="9" cy="10" r="3" stroke="#2f5ff0" stroke-width="1.3"/></svg>
<div class="a st" style="left:328px">AI 校对</div>
<svg class="a" style="left:374px;top:1025px" width="7" height="5" viewBox="0 0 7 5"><path d="M1 1L3.5 3.5L6 1" stroke="#333" stroke-width="1.2" fill="none"/></svg>

</body></html>
